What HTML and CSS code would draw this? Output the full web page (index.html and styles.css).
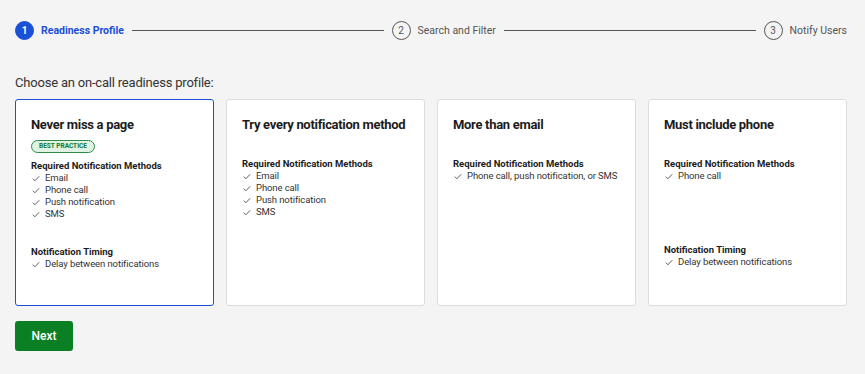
FILE: index.html
```
<!DOCTYPE html>
<html>
<head>
	<meta charset="utf-8">
	<title>Readiness Profile</title>
<link rel="stylesheet" href="styles.css">
</head>

<body>

<div id="row_steps">
<div class="step step_active"><span class="step_num">1</span><span class="step_label">Readiness Profile</span></div>
<div class="step_line"></div>
<div class="step"><span class="step_num">2</span><span class="step_label">Search and Filter</span></div>
<div class="step_line"></div>
<div class="step"><span class="step_num">3</span><span class="step_label">Notify Users</span></div>
</div>

<div id="txt_choose">Choose an on-call readiness profile:</div>

<div id="row_cards">

<div class="card card_selected">
<div class="card_title">Never miss a page</div>
<div class="badge_row"><span class="badge">BEST PRACTICE</span></div>
<div class="sec sec_methods">
<div class="sec_title">Required Notification Methods</div>
<div class="item"><svg class="chk" viewBox="0 0 10 8"><path d="M1 4.2 L3.6 6.8 L9 1.2"/></svg>Email</div>
<div class="item"><svg class="chk" viewBox="0 0 10 8"><path d="M1 4.2 L3.6 6.8 L9 1.2"/></svg>Phone call</div>
<div class="item"><svg class="chk" viewBox="0 0 10 8"><path d="M1 4.2 L3.6 6.8 L9 1.2"/></svg>Push notification</div>
<div class="item"><svg class="chk" viewBox="0 0 10 8"><path d="M1 4.2 L3.6 6.8 L9 1.2"/></svg>SMS</div>
</div>
<div class="sec">
<div class="sec_title">Notification Timing</div>
<div class="item"><svg class="chk" viewBox="0 0 10 8"><path d="M1 4.2 L3.6 6.8 L9 1.2"/></svg>Delay between notifications</div>
</div>
</div>

<div class="card">
<div class="card_title">Try every notification method</div>
<div class="badge_row"></div>
<div class="sec sec_methods">
<div class="sec_title">Required Notification Methods</div>
<div class="item"><svg class="chk" viewBox="0 0 10 8"><path d="M1 4.2 L3.6 6.8 L9 1.2"/></svg>Email</div>
<div class="item"><svg class="chk" viewBox="0 0 10 8"><path d="M1 4.2 L3.6 6.8 L9 1.2"/></svg>Phone call</div>
<div class="item"><svg class="chk" viewBox="0 0 10 8"><path d="M1 4.2 L3.6 6.8 L9 1.2"/></svg>Push notification</div>
<div class="item"><svg class="chk" viewBox="0 0 10 8"><path d="M1 4.2 L3.6 6.8 L9 1.2"/></svg>SMS</div>
</div>
</div>

<div class="card">
<div class="card_title">More than email</div>
<div class="badge_row"></div>
<div class="sec sec_methods">
<div class="sec_title">Required Notification Methods</div>
<div class="item"><svg class="chk" viewBox="0 0 10 8"><path d="M1 4.2 L3.6 6.8 L9 1.2"/></svg>Phone call, push notification, or SMS</div>
</div>
</div>

<div class="card">
<div class="card_title">Must include phone</div>
<div class="badge_row"></div>
<div class="sec sec_methods">
<div class="sec_title">Required Notification Methods</div>
<div class="item"><svg class="chk" viewBox="0 0 10 8"><path d="M1 4.2 L3.6 6.8 L9 1.2"/></svg>Phone call</div>
</div>
<div class="sec">
<div class="sec_title">Notification Timing</div>
<div class="item"><svg class="chk" viewBox="0 0 10 8"><path d="M1 4.2 L3.6 6.8 L9 1.2"/></svg>Delay between notifications</div>
</div>
</div>

</div>

<div id="row_next">
<div id="btn_next">Next</div>
</div>

</body>

</html>
```

FILE: styles.css
```
body {
	margin: 0;
	padding: 20px 18px 0 15px;
	background-color: #f4f4f4;
	font-family: Roboto, "Noto Sans", sans-serif;
	color: #1c1c1c;
}

#row_steps {
	display: flex;
	align-items: center;
	height: 20px;
}

.step {
	display: flex;
	align-items: center;
	gap: 7px;
	font-size: 10.5px;
	color: #555;
}

.step_num {
	display: inline-block;
	width: 17px;
	height: 17px;
	border: #555 1px solid;
	border-radius: 50%;

	text-align: center;
	line-height: 17px;
	font-size: 10px;
}

.step_active {
	color: #1a4fd8;
	font-weight: 700;
}

.step_active .step_num {
	background-color: #1a4fd8;
	border-color: #1a4fd8;
	color: white;
	font-weight: 700;
}

.step_line {
	flex: 1;
	height: 1px;
	margin: 0 8px;
	background-color: #555;
}

#txt_choose {
	margin-top: 35px;
	font-size: 13px;
	letter-spacing: -0.2px;
	color: #333;
}

#row_cards {
	display: flex;
	gap: 12px;
	margin-top: 9px;
}

.card {
	flex: 1;
	height: 207px;
	box-sizing: border-box;
	padding: 17px 15px;

	background-color: white;
	border: #dcdcdc 1px solid;
	border-radius: 3px;
}

.card_selected {
	border-color: #1a4fd8;
}

.card_title {
	font-size: 13px;
	font-weight: 700;
	line-height: 16px;
	letter-spacing: -0.3px;
}

.badge_row {
	height: 25px;
	display: flex;
	align-items: center;
}

.card_selected .badge_row {
	height: 27px;
}

.badge {
	display: inline-block;
	padding: 0 7px;
	height: 11px;

	background-color: #dff2e3;
	border: #2e8b46 1px solid;
	border-radius: 7px;

	color: #137a2c;
	font-size: 6.5px;
	font-weight: 700;
	line-height: 11px;
}

.sec_title {
	font-size: 9.5px;
	font-weight: 700;
	line-height: 12px;
}

.sec_methods {
	height: 86px;
}

.item {
	display: flex;
	align-items: center;
	gap: 5px;
	margin-left: 1px;

	font-size: 9.5px;
	line-height: 12px;
	letter-spacing: -0.1px;
	white-space: nowrap;
	color: #333;
}

.chk {
	width: 8px;
	height: 7px;
	fill: none;
	stroke: #333;
	stroke-width: 1;
}

#row_next {
	margin-top: 15px;
}

#btn_next {
	display: inline-block;
	width: 58px;
	height: 30px;

	background-color: #0a7f23;
	border-radius: 3px;

	color: white;
	font-size: 12px;
	font-weight: 500;
	line-height: 30px;
	text-align: center;
}
```
